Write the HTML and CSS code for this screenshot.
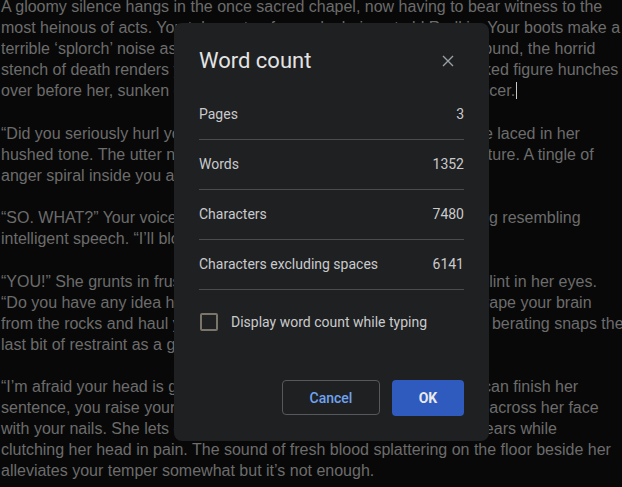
FILE: index.html
```html
<!DOCTYPE html>
<html>
<head>
  <title>Word count</title>
  <link rel="stylesheet" href="styles.css">
</head>
<body>
  <div class="doc">
    <p>A gloomy silence hangs in the once sacred chapel, now having to bear witness to the<br>
    most heinous of acts. You take a step forward, glaring at old Radkin. Your boots make a<br>
    terrible ‘splorch’ noise as you step into a fresh puddle of blood. All around, the horrid<br>
    stench of death renders you nauseous. Right ahead of you, the crooked figure hunches<br>
    over before her, sunken cheeks and lifeless eyes of a once great dancer.<span class="caret"></span></p>

    <p>“Did you seriously hurl your own sword at me?” Pure venom and rage laced in her<br>
    hushed tone. The utter nerve of the question rapidly stiffens your posture. A tingle of<br>
    anger spiral inside you as you clench your fists.</p>

    <p>“SO. WHAT?” Your voice thunders through the chapel, hardly anything resembling<br>
    intelligent speech. “I’ll blow your head off next!”</p>

    <p>“YOU!” She grunts in frustration, balling both fists with a murderous glint in her eyes.<br>
    “Do you have any idea how long it will take me to climb down and scrape your brain<br>
    from the rocks and haul you all the way back up here!” Her incessant berating snaps the<br>
    last bit of restraint as a growl escapes your throat.</p>

    <p>“I’m afraid your head is going to be the one rolling first!!” Before she can finish her<br>
    sentence, you raise your hand up high and drag your claws viciously across her face<br>
    with your nails. She lets out a deafening shriek, shedding hot, bitter tears while<br>
    clutching her head in pain. The sound of fresh blood splattering on the floor beside her<br>
    alleviates your temper somewhat but it’s not enough.</p>
  </div>

  <div class="dialog">
    <div class="dialog-head">
      <h2>Word count</h2>
      <button class="close" aria-label="Close">
        <svg width="12" height="12" viewBox="0 0 12 12"><path d="M1 1L11 11M11 1L1 11" stroke="#9aa0a6" stroke-width="1.4" fill="none"/></svg>
      </button>
    </div>

    <div class="stat"><span>Pages</span><span>3</span></div>
    <div class="stat"><span>Words</span><span>1352</span></div>
    <div class="stat"><span>Characters</span><span>7480</span></div>
    <div class="stat"><span>Characters excluding spaces</span><span>6141</span></div>

    <label class="check"><span class="box"></span>Display word count while typing</label>

    <div class="actions">
      <button class="btn cancel">Cancel</button>
      <button class="btn ok">OK</button>
    </div>
  </div>
</body>
</html>
```

FILE: styles.css
```css
body {
  margin: 0;
  background-color: #080808;
  overflow: hidden;
}
/* document text behind the dialog */
.doc {
  margin-top: -4px;
  padding-left: 1px;
  font-family: "Liberation Sans", Arial, sans-serif;
  font-size: 16px;
  line-height: 21px;
  color: #6c6c6c;
  white-space: nowrap;
}
.doc p {
  margin: 0 0 21.5px;
}
.caret {
  display: inline-block;
  width: 1px;
  height: 17px;
  margin-left: 1px;
  vertical-align: -3px;
  background-color: #c8c8c8;
}
/* dialog */
.dialog {
  position: absolute;
  left: 174px;
  top: 23px;
  width: 265px;
  padding: 24px 25px 25px;
  background-color: #1f2022;
  border-radius: 8px;
  font-family: Roboto, "Liberation Sans", sans-serif;
  font-size: 14px;
  color: #c9cacc;
}
.dialog-head {
  display: flex;
  align-items: center;
  justify-content: space-between;
  margin-bottom: 15px;
}
.dialog-head h2 {
  margin: 0;
  font-size: 22px;
  line-height: 28px;
  font-weight: 400;
  color: #e3e3e3;
}
.close {
  width: 24px;
  height: 24px;
  margin-right: 4px;
  padding: 0;
  border: none;
  background: none;
  display: flex;
  align-items: center;
  justify-content: center;
}
.stat {
  display: flex;
  justify-content: space-between;
  line-height: 20px;
  padding: 14px 0 15px;
  border-bottom: 1px solid #4a4c50;
}
.check {
  display: flex;
  align-items: center;
  gap: 13px;
  height: 20px;
  margin: 22px 0 0 1px;
}
.box {
  width: 14px;
  height: 14px;
  border: 2px solid #7a746b;
  border-radius: 2px;
}
.actions {
  display: flex;
  justify-content: flex-end;
  align-items: flex-start;
  gap: 12px;
  margin-top: 48px;
}
.btn {
  font-family: Roboto, "Liberation Sans", sans-serif;
  font-size: 14px;
  border-radius: 4px;
  cursor: pointer;
}
.cancel {
  width: 98px;
  height: 35px;
  border: 1px solid #55585d;
  background: none;
  color: #6fa3f0;
  font-weight: 500;
}
.ok {
  width: 72px;
  height: 36px;
  border: none;
  background-color: #2f5bbf;
  color: #e8eaed;
  font-weight: 700;
}
```
